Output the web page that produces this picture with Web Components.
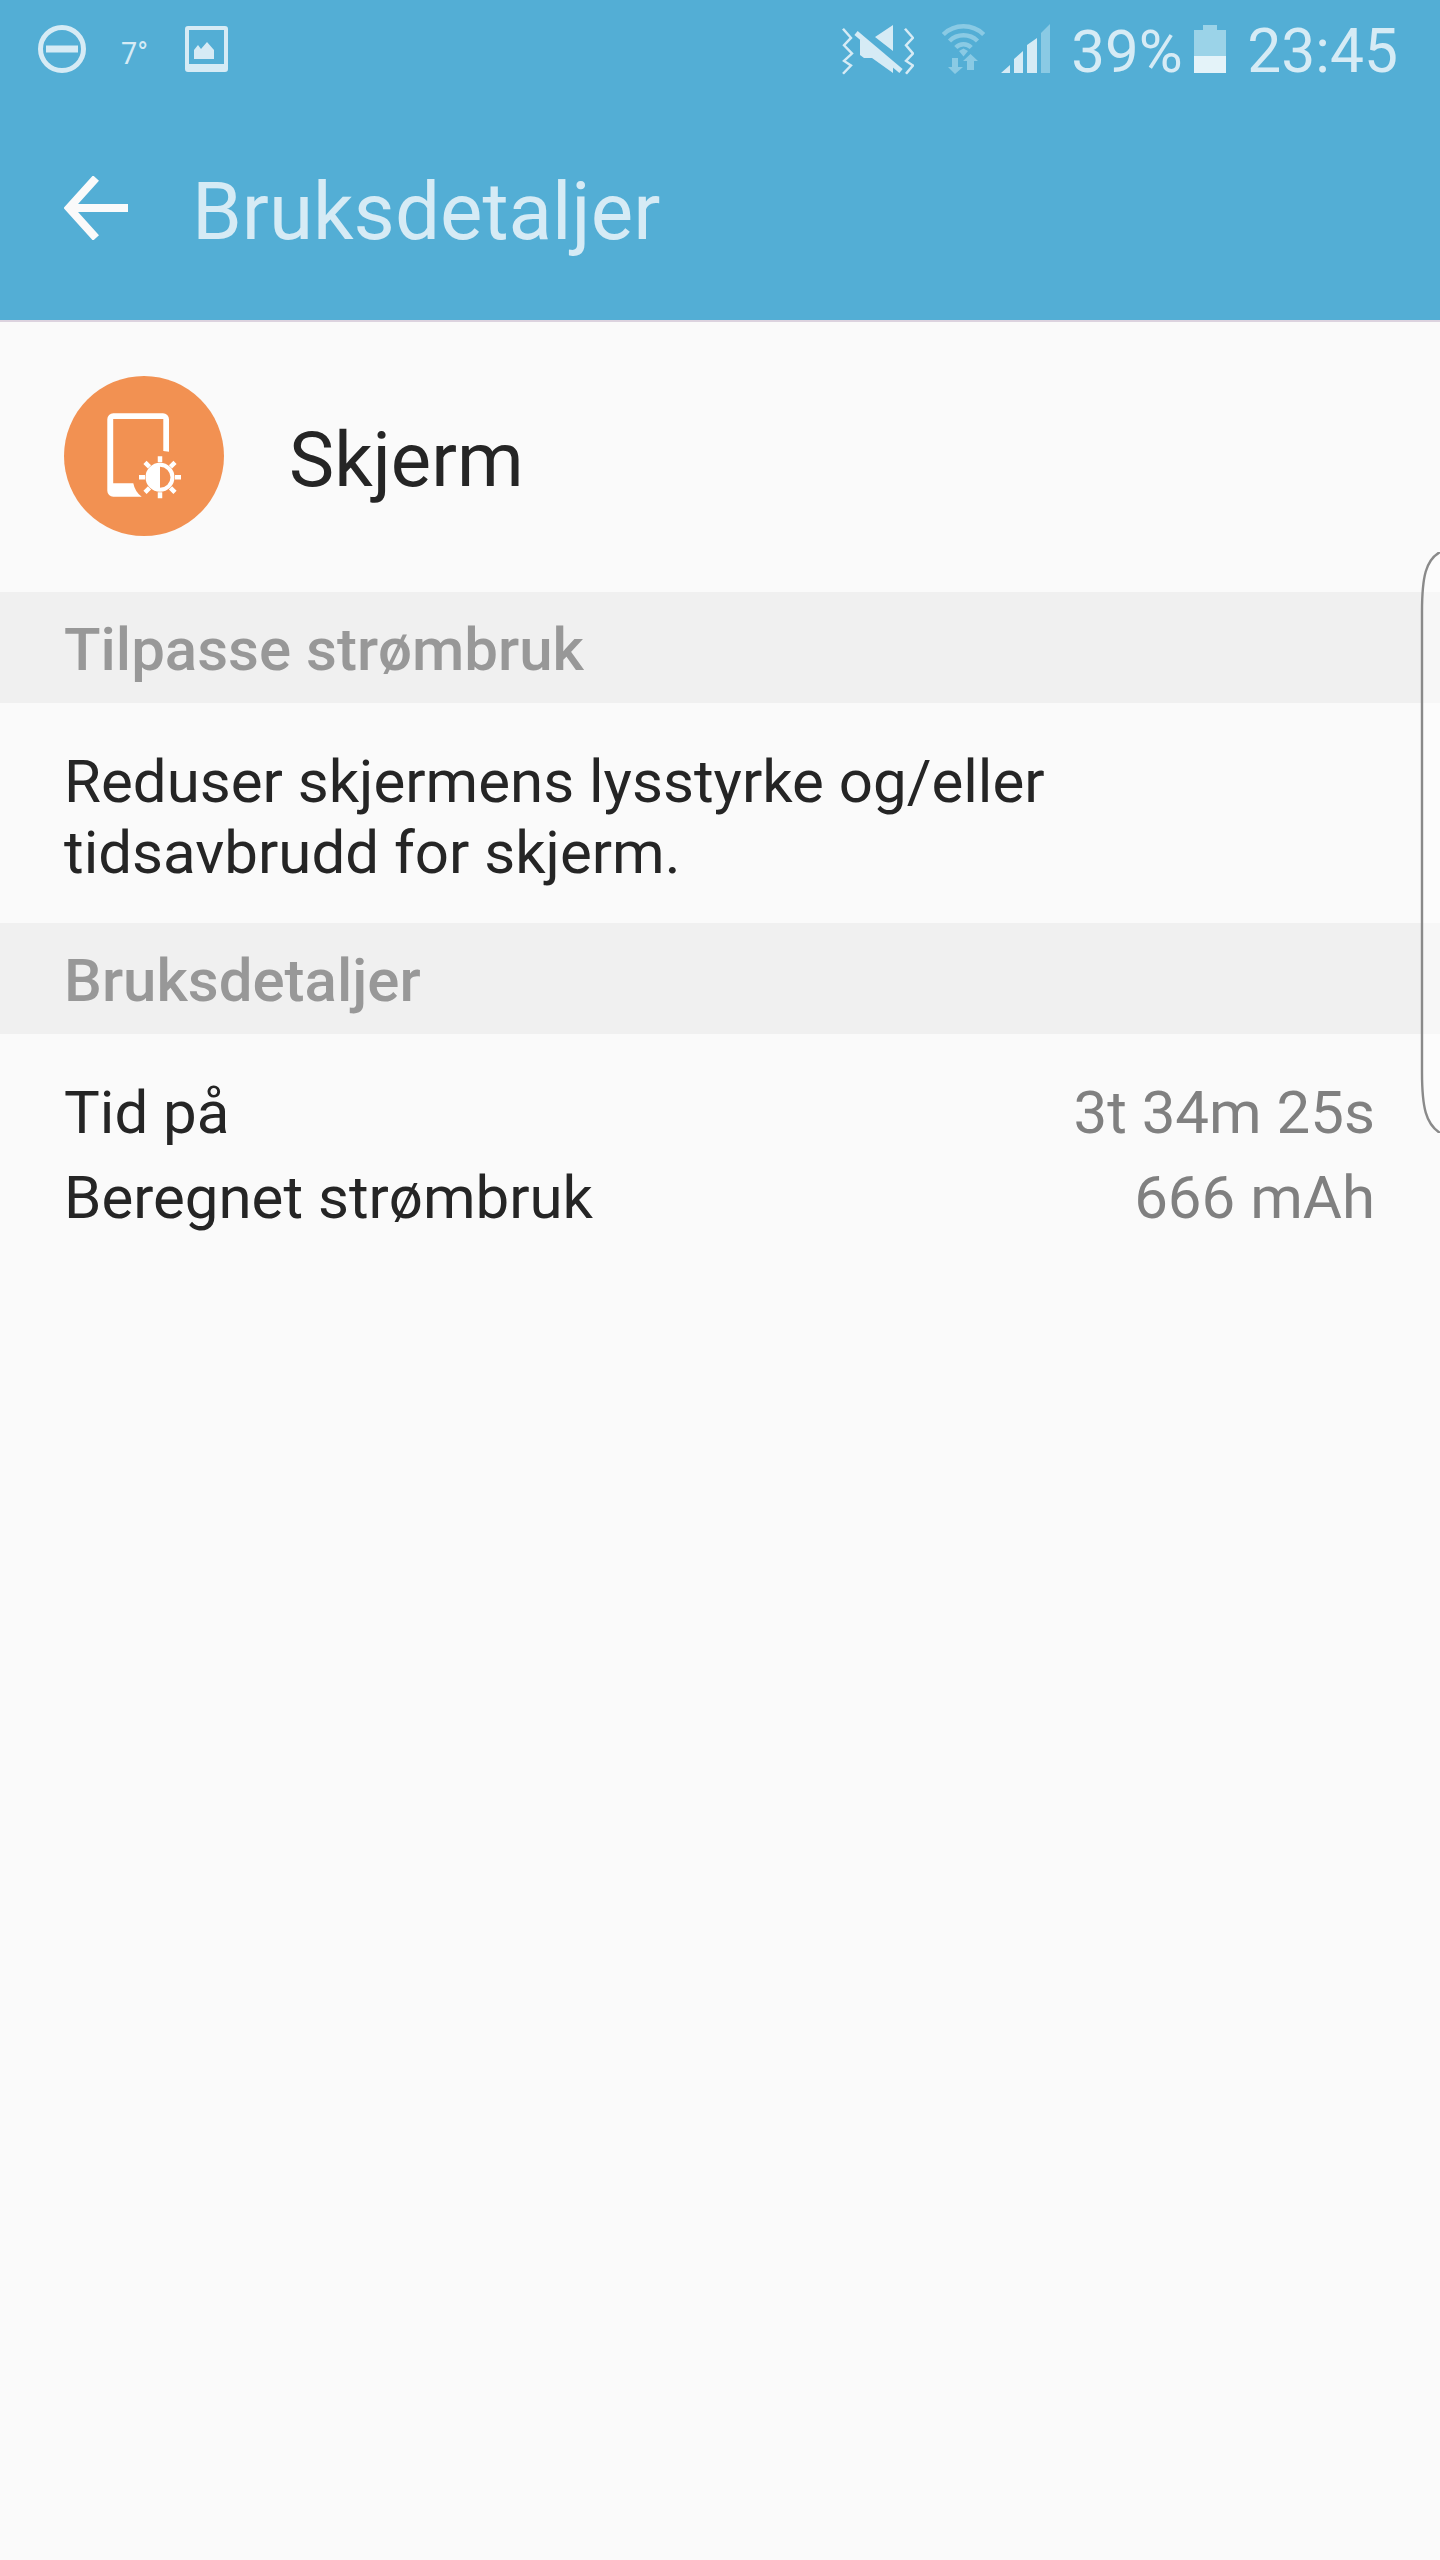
<!DOCTYPE html>
<html lang="nb"><head><meta charset="utf-8"><title>Bruksdetaljer</title>
<style>
html,body{margin:0;padding:0;background:#fafafa}
body{font-family:Roboto,"Liberation Sans",sans-serif}
</style></head><body>
<phone-screen>
  <status-bar></status-bar>
  <app-bar>Bruksdetaljer</app-bar>
  <app-header>Skjerm</app-header>
  <section-band>Tilpasse strømbruk</section-band>
  <tip-text>Reduser skjermens lysstyrke og/eller<br>tidsavbrudd for skjerm.</tip-text>
  <section-band>Bruksdetaljer</section-band>
  <detail-list>
    <detail-row label="Tid på" value="3t 34m 25s"></detail-row>
    <detail-row label="Beregnet strømbruk" value="666 mAh"></detail-row>
  </detail-list>
  <edge-handle></edge-handle>
</phone-screen>
<script>
function def(name, html){
  customElements.define(name, class extends HTMLElement{
    constructor(){super();this.attachShadow({mode:'open'}).innerHTML=typeof html==='function'?html(this):html;}
  });
}
def('phone-screen',`<style>:host{display:flex;flex-direction:column;position:relative;width:1440px;height:2560px;overflow:hidden;background:#fafafa;font-family:Roboto,"Liberation Sans",sans-serif}</style><slot></slot>`);
def('status-bar',`<style>
:host{display:flex;align-items:flex-start;box-sizing:border-box;height:100px;background:#53aed5;color:#d6ebf5;padding:24px 42px 0 38px}
svg{display:block;flex:none}
.t{font-size:60px;font-weight:400;line-height:56px;white-space:nowrap}
.w{font-size:32px;font-weight:400;line-height:40px;margin:9px 37px 0 35px;width:27px;white-space:nowrap;display:block;transform:scaleX(.9);transform-origin:left}
.s{flex:1}
</style>
<svg width="48" height="50" viewBox="0 0 48 50"><circle cx="24" cy="25" r="21.5" fill="none" stroke="#d6ebf5" stroke-width="5"/><rect x="8" y="21.500" width="32" height="7" fill="#d6ebf5"/></svg>
<span class="w">7°</span>
<svg width="43" height="48" viewBox="0 0 43 48"><path fill-rule="evenodd" fill="#d6ebf5" d="M3 2h37a3 3 0 0 1 3 3v40a3 3 0 0 1-3 3H3a3 3 0 0 1-3-3V5a3 3 0 0 1 3-3zM4 6v34h35V6z"/><path fill="#d6ebf5" d="M9 35V26l4-5 3 4 6-7 7 8v9z"/></svg>
<span class="s"></span>
<svg width="72" height="50" viewBox="0 0 72 50" style="margin-top:1px"><g fill="none" stroke="#d6ebf5" stroke-width="2.500"><path d="M1 4l8 10-7 8 8 9-8 8 7 5-8 9" transform="scale(1 .92)"/><path d="M63 4l8 10-7 8 7 9-7 8 7 5-7 9" transform="scale(1 .92)"/><path d="M14 8l45 38" stroke-width="5"/></g><path fill="#d6ebf5" d="M51 0 33 12l18 14zM18 14v16l4 3h8l21 15V38z"/></svg>
<svg width="43" height="50" viewBox="0 0 43 50" style="margin-left:28px"><g fill="none" stroke="#8acae4" stroke-width="4.500"><path d="M1.300 10.500a29 29 0 0 1 40.400 0"/><path d="M7.500 17a20 20 0 0 1 28 0"/><path d="M13.800 23.500a11 11 0 0 1 15.400 0"/></g><path fill="#8acae4" d="M17 27l4.500-2.500L26 27l-4.500 5.500zM10 34h6v9h5l-8 7-7-7h4zM25 46V37h-4l7.500-7L36 37h-4v9z"/></svg>
<svg width="49" height="50" viewBox="0 0 49 50" style="margin-left:16px"><path fill="#d6ebf5" d="M0 49 9 41v8zM13 49V35l9-8v22zM26 49V21l10-7v35z"/><path fill="#8acae4" d="M40 9 49 0v49h-9z"/></svg>
<span class="t" style="margin-left:21px;width:111px">39%</span>
<svg width="32" height="50" viewBox="0 0 32 50" style="margin-left:12px"><path fill="#9bd3e8" d="M9 1h14v5h9v26H0V6h9z"/><rect y="32" width="32" height="17" fill="#e4f3f9"/></svg>
<span class="t" style="margin-left:21px;font-size:60.500px">23:45</span>`);
def('app-bar',`<style>
:host{display:flex;align-items:center;box-sizing:border-box;height:222px;background:#53aed5;color:#d6ebf5;padding:0 0 4px 64px;border-bottom:2px solid #dcd3df}
svg{display:block;flex:none}
span{margin:7px 0 0 64px;font-size:80px;font-weight:400;line-height:90px;white-space:nowrap}
</style><svg width="64" height="64" viewBox="0 0 64 64"><path d="M64 32H6M32 2 5 32l27 30" fill="none" stroke="#fafafa" stroke-width="8" stroke-linejoin="miter"/></svg><span><slot></slot></span>`);
def('app-header',`<style>
:host{display:flex;align-items:center;box-sizing:border-box;height:270px;padding:0 0 3px 64px;color:#252525}
svg{display:block;flex:none}
span{margin:9px 0 0 65px;font-size:76px;line-height:90px}
</style><svg width="160" height="160" viewBox="0 0 160 160"><circle cx="80" cy="80" r="80" fill="#f29152"/>
<path fill="#fff" d="M49 37.300H99a6 6 0 0 1 6 6V75.700L99.300 75V43H49.200V107.300H69.300Q71 116 77.700 120.700H49.300a6 6 0 0 1-6-6V43.300a6 6 0 0 1 6-6z"/>
<g transform="translate(96 101.300)" stroke="#fff" stroke-width="4.500" fill="none"><circle r="12.500" stroke-width="4"/><path d="M0-12.500a12.500 12.500 0 0 0 0 25z" fill="#fff" stroke="none"/><path d="M0-21v6M0 15v6M-21 0h6M15 0h6M-15-15l4.500 4.500M15 15l-4.500-4.500M-15 15l4.500-4.500M15-15l-4.500 4.500"/></g></svg><span><slot></slot></span>`);
def('section-band',`<style>
:host{display:flex;align-items:center;box-sizing:border-box;height:111px;background:#f0f0f0;color:#989898;padding:4px 0 0 64px;font-size:60px;font-weight:500;white-space:nowrap}
</style><slot></slot>`);
def('tip-text',`<style>
:host{display:block;box-sizing:border-box;height:220px;padding:43px 64px 0;color:#252525;font-size:60px;line-height:71px;white-space:nowrap}
</style><slot></slot>`);
def('detail-list',`<style>:host{display:flex;flex-direction:column;padding:36px 65px 0 64px}</style><slot></slot>`);
def('detail-row',el=>`<style>
:host{display:flex;justify-content:space-between;height:85.500px;align-items:center;font-size:60px;line-height:86px;color:#252525;white-space:nowrap}
b{font-weight:400;color:#808080}
</style><span>${el.getAttribute('label')}</span><b>${el.getAttribute('value')}</b>`);
def('edge-handle',`<style>
:host{position:absolute;left:1420px;top:552px;width:20px;height:581px;display:block}
svg{display:block}
</style><svg width="20" height="581" viewBox="0 0 20 581"><path d="M20 0C6 8 2 24 2 60V520C2 556 6 572 20 581Z" fill="rgba(255,255,255,.45)"/><path d="M20 0C6 8 2 24 2 60V520C2 556 6 572 20 581" fill="none" stroke="#8a8a8a" stroke-width="2.400"/></svg>`);
</script>
</body></html>
